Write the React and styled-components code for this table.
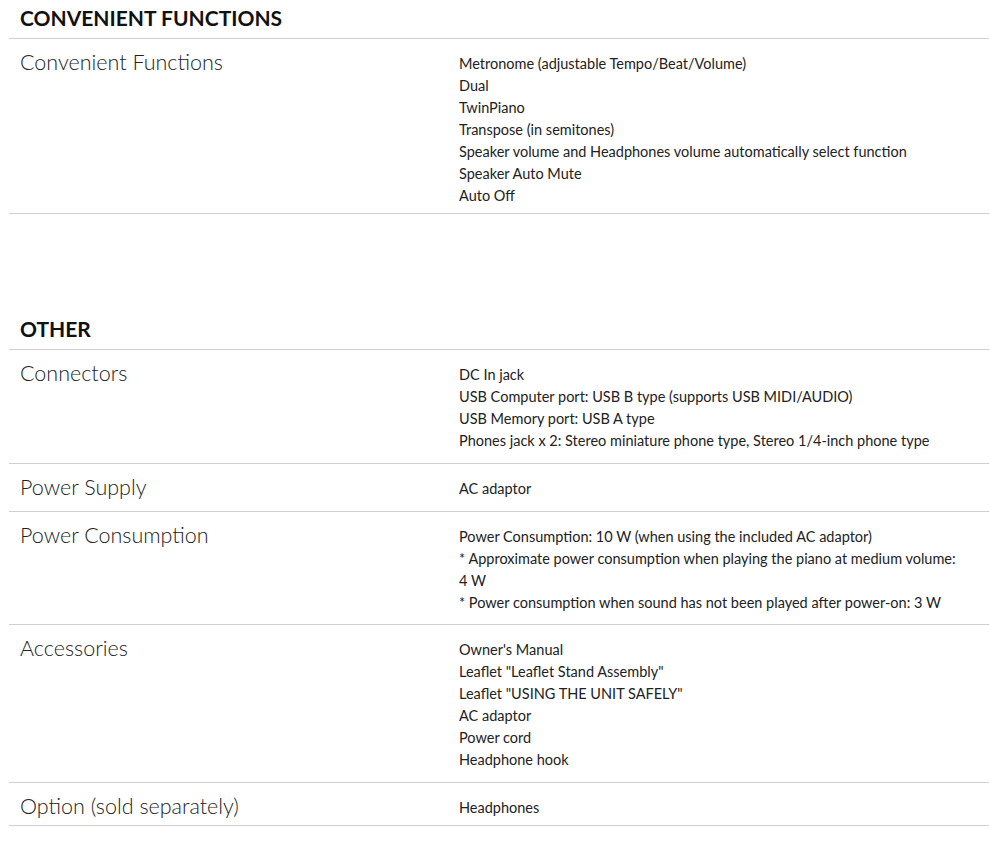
import React from 'react';
import styled, { createGlobalStyle } from 'styled-components';

const GlobalStyle = createGlobalStyle`
  body {
    margin: 0;
    background: #fff;
    font-family: Lato, "Liberation Sans", sans-serif;
    color: #222;
  }
`;

const Page = styled.div`
  padding: 0 1px 0 9px;
  width: 980px;
`;

const Section = styled.section`
  & + & {
    margin-top: 97px;
  }
`;

const SectionTitle = styled.h2`
  margin: 0;
  padding: 5px 0 8px 11px;
  font-size: 21px;
  line-height: 25px;
  font-weight: 700;
  color: #111;
  text-transform: uppercase;
  border-bottom: 1px solid #cfcfcf;
`;

const Row = styled.div`
  display: grid;
  grid-template-columns: 450px 1fr;
  padding: 14px 10px ${(p) => p.$pb ?? 11}px 0;
  border-bottom: 1px solid #cfcfcf;
`;

const Label = styled.div`
  padding-left: 11px;
  font-size: 21.5px;
  line-height: 18px;
  font-weight: 300;
  color: #222;
`;

const Values = styled.ul`
  margin: 0;
  padding: 0;
  list-style: none;
`;

const Value = styled.li`
  font-size: 14.5px;
  line-height: 22px;
  color: #222;
`;

const sections = [
  {
    title: 'Convenient Functions',
    rows: [
      {
        label: 'Convenient Functions',
        pb: 6,
        values: [
          'Metronome (adjustable Tempo/Beat/Volume)',
          'Dual',
          'TwinPiano',
          'Transpose (in semitones)',
          'Speaker volume and Headphones volume automatically select function',
          'Speaker Auto Mute',
          'Auto Off',
        ],
      },
    ],
  },
  {
    title: 'Other',
    rows: [
      {
        label: 'Connectors',
        values: [
          'DC In jack',
          'USB Computer port: USB B type (supports USB MIDI/AUDIO)',
          'USB Memory port: USB A type',
          'Phones jack x 2: Stereo miniature phone type, Stereo 1/4-inch phone type',
        ],
      },
      { label: 'Power Supply', values: ['AC adaptor'] },
      {
        label: 'Power Consumption',
        pb: 10,
        values: [
          'Power Consumption: 10 W (when using the included AC adaptor)',
          '* Approximate power consumption when playing the piano at medium volume: 4\u00a0W',
          '* Power consumption when sound has not been played after power-on: 3 W',
        ],
      },
      {
        label: 'Accessories',
        values: [
          "Owner's Manual",
          'Leaflet "Leaflet Stand Assembly"',
          'Leaflet "USING THE UNIT SAFELY"',
          'AC adaptor',
          'Power cord',
          'Headphone hook',
        ],
      },
      { label: 'Option (sold separately)', pb: 6, values: ['Headphones'] },
    ],
  },
];

export default function App() {
  return (
    <>
      <GlobalStyle />
      <Page>
        {sections.map((s) => (
          <Section key={s.title}>
            <SectionTitle>{s.title}</SectionTitle>
            {s.rows.map((r) => (
              <Row key={r.label} $pb={r.pb}>
                <Label>{r.label}</Label>
                <Values>
                  {r.values.map((v, i) => (
                    <Value key={i}>{v}</Value>
                  ))}
                </Values>
              </Row>
            ))}
          </Section>
        ))}
      </Page>
    </>
  );
}
